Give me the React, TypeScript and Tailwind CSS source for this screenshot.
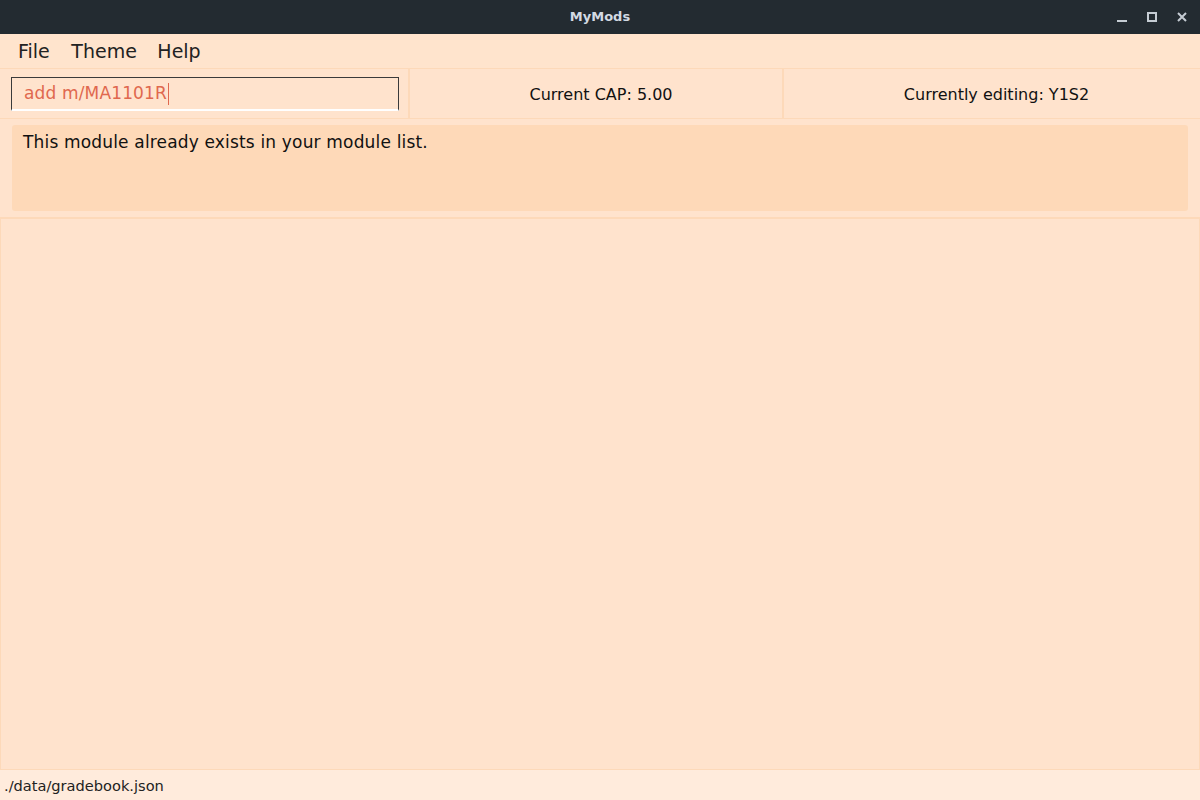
const font = { fontFamily: '"DejaVu Sans", "Noto Sans", sans-serif' };

function TitleBar() {
  return (
    <div className="relative flex h-[34px] items-center justify-center bg-[#232b31]">
      <span className="text-[13px] font-bold text-[#d3dae3]">MyMods</span>
      <div className="absolute right-0 top-0 flex h-full items-center gap-[18px] pr-[12px]">
        <svg width="12" height="12" viewBox="0 0 12 12">
          <rect x="1" y="9" width="10" height="2" fill="#c5ccd3" />
        </svg>
        <svg width="12" height="12" viewBox="0 0 12 12">
          <rect x="2" y="2" width="8" height="8" fill="none" stroke="#c5ccd3" strokeWidth="2" />
        </svg>
        <svg width="12" height="12" viewBox="0 0 12 12">
          <path d="M2 2 L10 10 M10 2 L2 10" stroke="#c5ccd3" strokeWidth="2" />
        </svg>
      </div>
    </div>
  );
}

function MenuBar() {
  return (
    <div className="flex h-[34px] items-center gap-[20.5px] bg-[#ffe4cd] pl-[18px] pt-[1px] text-[19px] text-[#222]">
      <span>File</span>
      <span className="pl-[1px]">Theme</span>
      <span>Help</span>
    </div>
  );
}

function TopRow() {
  return (
    <div className="flex h-[51px] border-y border-[#fdd9b9] bg-[#ffe3cd]">
      <div className="flex w-[410px] items-center border-r-[2px] border-[#fdd9b9] pl-[11px] pr-[9px]">
        <div className="flex h-[34px] w-full items-center border-x border-t border-b-2 border-x-[#3a3a3a] border-t-[#3a3a3a] border-b-white pl-[12px] pt-[1px] text-[17px] tracking-[0.15px] text-[#e0684e]">
          <span>add m/MA1101R</span>
          <span className="ml-[1px] h-[22px] w-[1px] bg-[#e0684e]" />
        </div>
      </div>
      <div className="flex w-[374px] items-center justify-center border-r-[2px] border-[#fdd9b9] pl-[10px] pt-[2px] text-[16px] text-[#111]">
        Current CAP: 5.00
      </div>
      <div className="flex flex-1 items-center justify-center pl-[9px] pt-[2px] text-[16px] text-[#111]">
        Currently editing: Y1S2
      </div>
    </div>
  );
}

function ResultBox() {
  return (
    <div className="border-b-2 border-[#fdd9b9] bg-[#ffe3cd] px-[12px] pb-[6px] pt-[6px]">
      <div className="h-[86px] rounded-[3px] bg-[#fed9b8] px-[11px] pt-[5px] text-[17px] tracking-[0.17px] text-[#111]">
        This module already exists in your module list.
      </div>
    </div>
  );
}

export default function App() {
  return (
    <div className="flex h-[800px] w-[1200px] flex-col overflow-hidden" style={font}>
      <TitleBar />
      <MenuBar />
      <TopRow />
      <ResultBox />
      <div className="flex-1 border-x border-b border-[#fdd9b9] bg-[#ffe3cd]" />
      <div className="flex h-[30px] items-center bg-[#ffebdc] pl-[4px] pt-[2px] text-[14.6px] text-[#222]">
        ./data/gradebook.json
      </div>
    </div>
  );
}
